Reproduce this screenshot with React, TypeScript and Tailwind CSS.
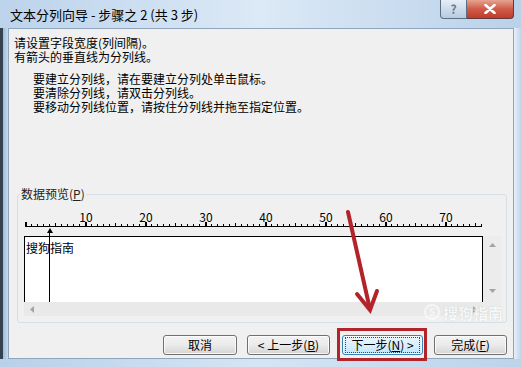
import React from "react";

const cjk = "font-['Noto_Sans_CJK_SC','Noto_Sans',sans-serif]";

const ticks = Array.from({ length: 77 }, (_, i) => i);
const labels = [10, 20, 30, 40, 50, 60, 70];

function Ruler() {
    return (
        <div className="relative h-[16px] w-[470px]">
            {labels.map((n) => (
                <span
                    key={n}
                    className="absolute top-0 -translate-x-1/2 text-[12px] leading-[12px] text-black"
                    style={{ left: 2 + n * 6 }}
                >
                    {n}
                </span>
            ))}
            <svg className="absolute left-0 top-[8px]" width="470" height="8">
                <rect x="1" y="7" width="457" height="1" fill="#000" />
                {ticks.map((i) => {
                    const x = 1 + i * 6;
                    if (i % 10 === 0) return <rect key={i} x={x} y={3} width={2} height={4} fill="#000" />;
                    if (i % 5 === 0) return <rect key={i} x={x} y={4} width={1} height={3} fill="#000" />;
                    return <rect key={i} x={x} y={5} width={1} height={2} fill="#000" />;
                })}
            </svg>
        </div>
    );
}

function Btn({ children, primary, className }: { children: React.ReactNode; primary?: boolean; className?: string }) {
    return (
        <div
            className={`h-[20px] rounded-[3px] border flex items-center justify-center text-[12px] leading-none text-black shadow-[inset_0_0_0_1px_rgba(255,255,255,0.8)] ${
                primary
                    ? "border-[#3c7fb1] bg-gradient-to-b from-[#eaf6fd] via-[#d9f0fc] to-[#bee6fd]"
                    : "border-[#707070] bg-gradient-to-b from-[#f2f2f2] via-[#ebebeb] to-[#d4d4d4]"
            } ${className ?? ""}`}
        >
            {primary ? (
                <span className="border border-dotted border-[#444] px-[5px] py-[1px]">{children}</span>
            ) : (
                children
            )}
        </div>
    );
}

function Tri({ dir }: { dir: "up" | "down" | "left" | "right" }) {
    const pts = {
        up: "0,4 7,4 3.5,0",
        down: "0,0 7,0 3.5,4",
        left: "4,0 4,7 0,3.5",
        right: "0,0 0,7 4,3.5",
    }[dir];
    const w = dir === "up" || dir === "down" ? 7 : 4;
    const h = dir === "up" || dir === "down" ? 4 : 7;
    return (
        <svg width={w} height={h}>
            <polygon points={pts} fill="#a3a3a3" />
        </svg>
    );
}

export default function App() {
    return (
        <div className={`relative w-[521px] h-[367px] overflow-hidden bg-gradient-to-r from-[#b9d0e9] via-[#d6e5f4] to-[#bcd3ea] ${cjk}`}>
            {/* title bar */}
            <div className="h-[28px] flex items-start bg-gradient-to-r from-[#bcd3eb] via-[#dce9f6] to-[#bad1ea]">
                <div className="self-center pl-[10px] text-[13px] text-black leading-none">
                    文本分列向导 - 步骤之 2 (共 3 步)
                </div>
                <div className="ml-auto mr-[7px] flex h-[19px]">
                    <div className="w-[27px] rounded-bl-[4px] border border-t-0 border-[#5c6f82] bg-gradient-to-b from-[#e6eef7] via-[#cddcec] to-[#b8cbe0] flex items-center justify-center text-[12px] font-bold text-[#6d7a88]">
                        ?
                    </div>
                    <div className="w-[47px] rounded-br-[4px] border border-t-0 border-l-0 border-[#5c3b3b] bg-gradient-to-b from-[#e4a491] via-[#cf5a48] to-[#c23a2c] flex items-center justify-center">
                        <svg width="12" height="10" viewBox="0 0 12 10">
                            <path d="M1.5 1 L10.5 9 M10.5 1 L1.5 9" stroke="#fff" strokeWidth="2.6" strokeLinecap="round" />
                        </svg>
                    </div>
                </div>
            </div>

            {/* frame + content */}
            <div className="flex h-[331px]">
                <div className="w-[3px] bg-[#34434f]" />
                <div className="w-[5px] bg-gradient-to-r from-[#9fbcd9] to-[#c7dbef]" />
                <div className="w-[506px] border border-[#8fa5bb] bg-[#f0f0f0] flex flex-col text-[12px] text-black">
                    <div className="pt-[7px] pl-[5px]">
                        <div className="h-[14px] leading-[14px]">请设置字段宽度(列间隔)。</div>
                        <div className="h-[14px] leading-[14px]">有箭头的垂直线为分列线。</div>
                    </div>
                    <div className="mt-[8px] pl-[24px]">
                        <div className="h-[14px] leading-[14px]">要建立分列线，请在要建立分列处单击鼠标。</div>
                        <div className="h-[14px] leading-[14px]">要清除分列线，请双击分列线。</div>
                        <div className="h-[14px] leading-[14px]">要移动分列线位置，请按住分列线并拖至指定位置。</div>
                    </div>

                    {/* group box */}
                    <div className="relative mt-[80px] ml-[8px] mr-[6px] h-[129px] rounded-[3px] border border-[#d5dfe5] pt-[16px] pl-[6px]">
                        <div className="absolute -top-[8px] left-[2px] bg-[#f0f0f0] px-[1px] leading-[14px] text-[#222]">
                            数据预览(<span className="underline">P</span>)
                        </div>
                        <div className="relative">
                            <Ruler />
                            <div className="mt-[9px] flex">
                                <div className="w-[459px] flex flex-col">
                                    <div className="h-[66px] border-t border-l border-r border-black bg-white pl-[1px] pt-[4px] text-[12px] leading-[14px]">
                                        搜狗指南
                                    </div>
                                    <div className="h-[14px] bg-[#e9e9e9] flex items-center justify-between px-[6px]">
                                        <Tri dir="left" />
                                        <Tri dir="right" />
                                    </div>
                                </div>
                                <div className="w-[18px] h-[80px] bg-[#ececec] flex flex-col items-center pt-[7px]">
                                    <Tri dir="up" />
                                    <div className="mt-[42px]">
                                        <Tri dir="down" />
                                    </div>
                                </div>
                            </div>
                            {/* column break marker */}
                            <div className="absolute left-[25px] top-[17px] w-0 h-0 border-l-[3px] border-r-[3px] border-b-[5px] border-l-transparent border-r-transparent border-b-black -translate-x-[2px]" />
                            <div className="absolute left-[25px] top-[21px] w-[1px] h-[70px] bg-black" />
                        </div>
                    </div>

                    {/* buttons */}
                    <div className="mt-[12px] mr-[6px] flex justify-end">
                        <Btn className="w-[74px]">取消</Btn>
                        <Btn className="ml-[10px] w-[83px]">
                            &lt; 上一步(<span className="underline">B</span>)
                        </Btn>
                        <Btn primary className="ml-[12px] w-[81px]">
                            下一步(<span className="underline">N</span>) &gt;
                        </Btn>
                        <Btn className="ml-[11px] w-[73px]">
                            完成(<span className="underline">F</span>)
                        </Btn>
                    </div>
                </div>
                <div className="w-[7px] bg-gradient-to-r from-[#e8f0f8] to-[#bfd4ea]" />
            </div>

            {/* watermark */}
            <div className="absolute left-[424px] top-[304px] flex items-center gap-[3px] opacity-60">
                <div className="w-[16px] h-[16px] rounded-full border-[2px] border-white flex items-center justify-center text-[10px] font-bold text-white leading-none">
                    S
                </div>
                <span className="text-[15px] font-bold text-white leading-none [text-shadow:0_0_1px_#9aa]">搜狗指南</span>
            </div>

            {/* annotation */}
            <div className="absolute left-[337px] top-[328px] w-[90px] h-[33px] border-[3px] border-[#b3232a]" />
            <svg className="absolute inset-0 pointer-events-none" width="521" height="367">
                <path d="M348 212 L369 305" stroke="#b3232a" strokeWidth="4" strokeLinecap="round" />
                <path d="M357 294 L370 310 L377 291" stroke="#b3232a" strokeWidth="4" fill="none" strokeLinecap="round" strokeLinejoin="miter" />
            </svg>
        </div>
    );
}
